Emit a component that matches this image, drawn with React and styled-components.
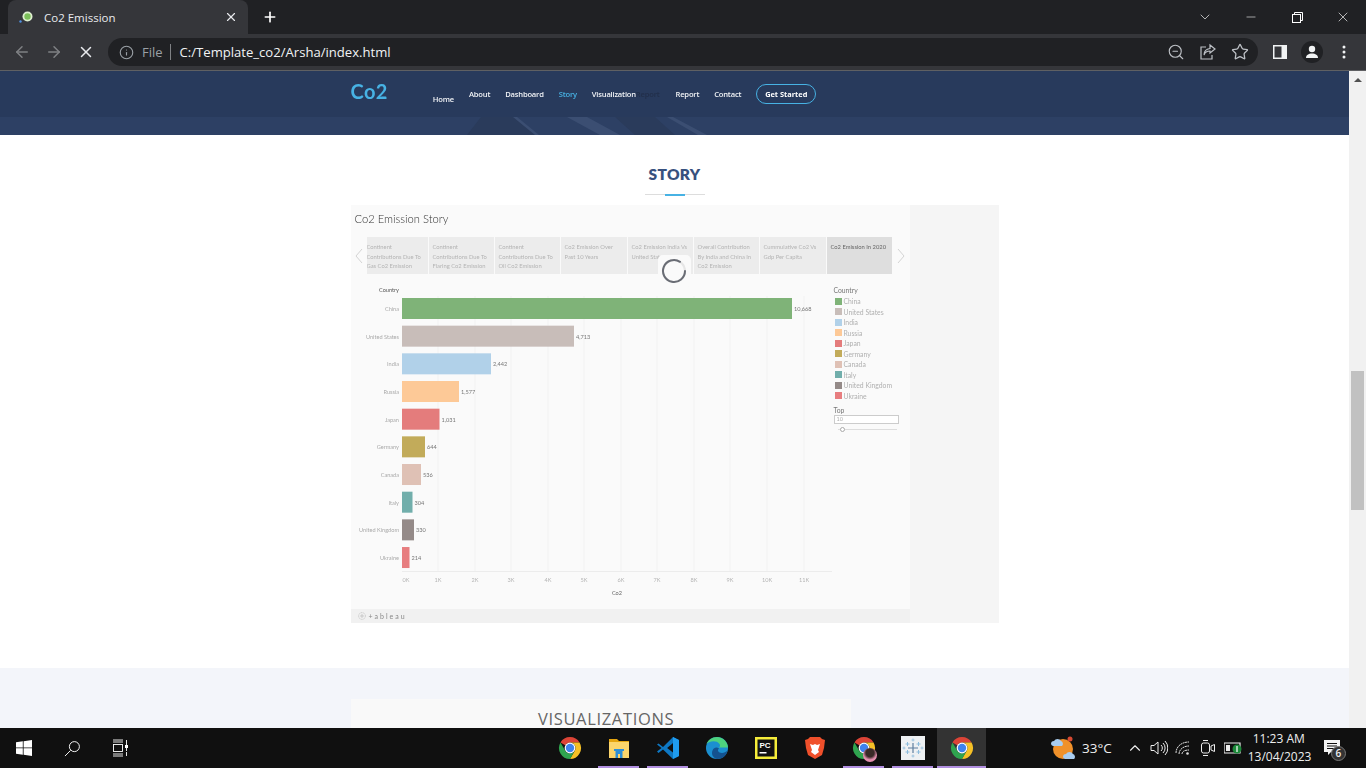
import React from "react";
import styled, { createGlobalStyle } from "styled-components";
import { ArrowLeft, ArrowRight, X, Plus, Info, ZoomOut, Star, ChevronDown, Minus, ChevronUp } from "lucide-react";

const Global = createGlobalStyle`
    html, body {
        margin: 0;
        height: 768px;
        overflow: hidden;
        background: #fff;
        font-family: "Open Sans", "Liberation Sans", sans-serif;
    }
`;

const Screen = styled.div`
    width: 1366px;
    height: 768px;
    display: flex;
    flex-direction: column;
    overflow: hidden;
`;

// Browser chrome
const TabStrip = styled.div`
    height: 34px;
    background: #202124;
    display: flex;
    align-items: flex-end;
    padding-left: 8px;
    color: #fff;
`;

const Tab = styled.div`
    width: 240px;
    height: 34px;
    box-sizing: border-box;
    background: #35363a;
    border-radius: 8px 8px 0 0;
    display: flex;
    align-items: center;
    padding: 0 10px 0 10px;
    font-size: 11.5px;
    color: #e8eaed;
`;

const TabTitle = styled.span`
    flex: 1;
    margin-left: 10px;
`;

const NewTab = styled.div`
    width: 44px;
    height: 34px;
    display: flex;
    align-items: center;
    justify-content: center;
`;

const WindowButtons = styled.div`
    margin-left: auto;
    height: 34px;
    display: flex;
    align-items: center;
`;

const WindowButton = styled.div`
    width: 46px;
    display: flex;
    justify-content: center;
`;

const Toolbar = styled.div`
    height: 36px;
    background: #35363a;
    border-bottom: 1px solid #5f6063;
    display: flex;
    align-items: center;
    padding-left: 6px;
`;

const NavIcon = styled.div`
    width: 32px;
    display: flex;
    justify-content: center;
    color: ${(p) => (p.$on ? "#e8eaed" : "#7f8184")};
`;

const Omnibox = styled.div`
    width: 1150px;
    height: 28px;
    margin-left: 6px;
    border-radius: 14px;
    background: #202124;
    display: flex;
    align-items: center;
    padding-left: 11px;
    box-sizing: border-box;
    font-size: 14px;
`;

const FileLabel = styled.span`
    color: #9aa0a6;
    font-size: 13px;
    margin-left: 8px;
    padding-right: 7px;
    border-right: 1px solid #7f8184;
    line-height: 16px;
`;

const Url = styled.span`
    color: #f1f3f4;
    margin-left: 9px;
    font-size: 13.1px;
`;

const OmniActions = styled.div`
    margin-left: auto;
    display: flex;
    gap: 14px;
    padding-right: 9px;
    color: #bdc1c6;
`;

const ToolRight = styled.div`
    display: flex;
    align-items: center;
    margin-left: 6px;
`;

const ToolSlot = styled.div`
    width: 32px;
    height: 24px;
    display: flex;
    align-items: center;
    justify-content: center;
`;

const Avatar = styled.div`
    width: 22px;
    height: 22px;
    border-radius: 50%;
    background: #202124;
    display: flex;
    align-items: center;
    justify-content: center;
`;

// Page
const Viewport = styled.div`
    height: 657px;
    display: flex;
    overflow: hidden;
`;

const Page = styled.div`
    width: 1349px;
    height: 657px;
    overflow: hidden;
`;

const Scrollbar = styled.div`
    width: 17px;
    background: #f1f1f1;
    display: flex;
    flex-direction: column;
    align-items: center;
`;

const ScrollArrow = styled.div`
    width: 0;
    height: 0;
    margin-top: 7px;
    border-left: 4px solid transparent;
    border-right: 4px solid transparent;
    border-bottom: 4px solid #505050;
`;

const ScrollThumb = styled.div`
    width: 13px;
    height: 139px;
    margin-top: 289px;
    background: #c1c1c1;
`;

const Header = styled.header`
    height: 46px;
    background: #283a5c;
`;

const HeaderInner = styled.div`
    width: 648px;
    margin: 0 auto;
    height: 46px;
    display: flex;
    align-items: flex-start;
    filter: blur(0.35px);
`;

const Logo = styled.div`
    font-family: "Lato", sans-serif;
    font-weight: 700;
    font-size: 20px;
    line-height: 24px;
    letter-spacing: 0.4px;
    color: #47b2e4;
    margin: 8px 45px 0 0;
`;

const Menu = styled.nav`
    display: flex;
    align-items: flex-start;
    padding-top: 17px;
`;

const MenuItem = styled.a`
    font-size: 7.6px;
    font-weight: 600;
    line-height: 12px;
    letter-spacing: -0.2px;
    color: ${(p) => p.$color || "#f1f3f6"};
    margin-right: ${(p) => (p.$gap === undefined ? 15 : p.$gap)}px;
    margin-top: ${(p) => p.$drop || 0}px;
    white-space: nowrap;
`;

const GetStarted = styled.a`
    width: 60px;
    height: 20px;
    box-sizing: border-box;
    margin: -4px 0 0 0;
    border: 1px solid #47b2e4;
    border-radius: 10px;
    font-size: 7.4px;
    font-weight: 700;
    color: #fff;
    display: flex;
    align-items: center;
    justify-content: center;
`;

const HeroStrip = styled.div`
    height: 18px;
    background: #2d4064;
    overflow: hidden;
`;

const StorySection = styled.section`
    background: #fff;
    height: 533px;
    padding-top: 28px;
    box-sizing: border-box;
`;

const SectionTitle = styled.h2`
    margin: 0;
    text-align: center;
    font-family: "Lato", sans-serif;
    font-size: 15.5px;
    font-weight: 800;
    line-height: 22px;
    letter-spacing: 0.3px;
    color: #37517e;
`;

const Divider = styled.div`
    width: 60px;
    height: 1px;
    margin: 9px auto 0;
    background: #ddd;
    display: flex;
    justify-content: center;
`;

const DividerAccent = styled.div`
    width: 20px;
    height: 2px;
    background: #47b2e4;
`;

const Embed = styled.div`
    width: 648px;
    height: 418px;
    margin: 10px auto 0;
    background: #f5f5f5;
    display: flex;
`;

const Viz = styled.div`
    width: 559px;
    display: flex;
    flex-direction: column;
    background: #fafafa;
    position: relative;
    filter: blur(0.4px);
`;

const StoryTitle = styled.div`
    font-family: "Lato", sans-serif;
    font-weight: 300;
    font-size: 11.2px;
    line-height: 16px;
    color: #333;
    padding: 6px 0 0 4px;
`;

const StoryNav = styled.div`
    display: flex;
    align-items: stretch;
    margin-top: 10px;
    height: 37px;
    overflow: visible;
`;

const StoryArrow = styled.div`
    width: 16px;
    display: flex;
    align-items: center;
    justify-content: center;
    flex-shrink: 0;
`;

const Points = styled.div`
    display: flex;
    gap: 1px;
    width: 526px;
    flex-shrink: 0;
    overflow: hidden;
`;

const Point = styled.div`
    width: ${(p) => p.$w}px;
    flex-shrink: 0;
    box-sizing: border-box;
    padding: 5px 2px 0 ${(p) => (p.$clip ? 0 : 4)}px;
    background: ${(p) => (p.$active ? "#dedede" : "#ececec")};
    color: ${(p) => (p.$active ? "#666" : "#b4b4b4")};
    font-family: "Lato", sans-serif;
    font-size: 5.8px;
    line-height: 9.5px;
`;

const Spinner = styled.div`
    position: absolute;
    left: 307px;
    top: 50px;
    width: 33px;
    height: 32px;
    border-radius: 5px;
    background: #fafafa;
    display: flex;
    align-items: center;
    justify-content: center;
`;

const ChartRow = styled.div`
    display: flex;
    height: 335px;
    margin-top: 0;
`;

const Legend = styled.div`
    padding-top: 12px;
    width: 68px;
    font-family: "Lato", sans-serif;
    font-size: 6.8px;
    color: #b0b0b0;
`;

const LegendTitle = styled.div`
    color: #777;
    line-height: 9px;
    margin-bottom: 1px;
`;

const LegendItem = styled.div`
    height: 10.5px;
    display: flex;
    align-items: center;
    padding-left: 1px;
    gap: 2px;
`;

const Swatch = styled.span`
    width: 7px;
    height: 7px;
    background: ${(p) => p.$c};
`;

const TopLabel = styled(LegendTitle)`
    margin: 5px 0 0;
`;

const TopInput = styled.div`
    width: 65px;
    height: 9px;
    border: 1px solid #ccc;
    box-sizing: border-box;
    background: #fff;
    line-height: 7px;
    padding-left: 2px;
    font-size: 5.5px;
`;

const Slider = styled.div`
    width: 59px;
    height: 1px;
    margin: 5px 0 0 4px;
    background: #ddd;
    position: relative;
`;

const SliderThumb = styled.div`
    position: absolute;
    left: 2px;
    top: -2px;
    width: 3px;
    height: 3px;
    border: 1px solid #aaa;
    border-radius: 50%;
    background: #fff;
`;

const VizFooter = styled.div`
    height: 14px;
    background: #f1f1f1;
    margin-top: auto;
    display: flex;
    align-items: center;
    padding-left: 7px;
    gap: 3px;
    font-family: "Lato", sans-serif;
    font-size: 7px;
    letter-spacing: 2px;
    color: #888;
`;

const VisualSection = styled.section`
    background: #f3f5fa;
    height: 60px;
    padding-top: 31px;
    box-sizing: border-box;
`;

const VisualCard = styled.div`
    width: 500px;
    height: 60px;
    margin-left: 351px;
    background: #f9f9f9;
    padding: 9px 0 0 187px;
    box-sizing: border-box;
    font-size: 16.5px;
    line-height: 21px;
    color: #666;
    letter-spacing: 0.65px;
`;

// Taskbar
const Taskbar = styled.div`
    height: 40px;
    background: #101010;
    display: flex;
    align-items: stretch;
    color: #fff;
`;

const SystemSlot = styled.div`
    width: 48px;
    display: flex;
    align-items: center;
    justify-content: center;
`;

const Pinned = styled.div`
    display: flex;
    margin-left: 401px;
`;

const PinSlot = styled.div`
    width: 49px;
    height: 40px;
    box-sizing: border-box;
    display: flex;
    align-items: center;
    justify-content: center;
    background: ${(p) => (p.$active ? "#333" : "transparent")};
    position: relative;
`;

const RunMark = styled.div`
    position: absolute;
    bottom: 0;
    left: ${(p) => (p.$full ? 0 : 4)}px;
    right: ${(p) => (p.$full ? 0 : 4)}px;
    height: 2px;
    background: #b18fe0;
`;

const ProfileDot = styled.div`
    position: absolute;
    left: 24px;
    top: 20px;
    width: 14px;
    height: 14px;
    border-radius: 50%;
    background: radial-gradient(circle at 50% 35%, #3a2a28 0 35%, #e58fb0 60%);
`;

const Tray = styled.div`
    display: flex;
    align-items: center;
    margin-left: 64px;
    font-size: 13px;
    color: #eee;
`;

const Temp = styled.span`
    margin: 0 11px 0 6px;
    font-size: 13.5px;
`;

const TrayIcon = styled.div`
    width: ${(p) => p.$w || 25}px;
    display: flex;
    justify-content: center;
`;

const Clock = styled.div`
    width: 62px;
    margin-left: 2px;
    text-align: center;
    font-size: 12px;
    line-height: 18px;
`;

const Notify = styled.div`
    margin-left: 14px;
    position: relative;
    display: flex;
`;

const NotifyBadge = styled.div`
    position: absolute;
    left: 7px;
    top: 6px;
    width: 15px;
    height: 15px;
    border-radius: 50%;
    background: #333;
    border: 1px solid #777;
    box-sizing: border-box;
    font-size: 10px;
    line-height: 13px;
    text-align: center;
    font-weight: 600;
`;

const points = [
    { w: 61, clip: true, t: "Continent Contributions Due To Gas Co2 Emission" },
    { w: 65, t: "Continent Contributions Due To Flaring Co2 Emission" },
    { w: 65, t: "Continent Contributions Due To Oil Co2 Emission" },
    { w: 66, t: "Co2 Emission Over Past 10 Years" },
    { w: 65, t: "Co2 Emission India Vs United States" },
    { w: 65, t: "Overall Contribution By India and China In Co2 Emission" },
    { w: 66, t: "Cummulative Co2 Vs Gdp Per Capita" },
    { w: 65, t: "Co2 Emission In 2020", active: true },
];

const countries = [
    { name: "China", end: 792, value: "10,668", color: "#7fb378" },
    { name: "United States", end: 574, value: "4,713", color: "#c8bdb9" },
    { name: "India", end: 491, value: "2,442", color: "#b1d1e9" },
    { name: "Russia", end: 459, value: "1,577", color: "#fdc997" },
    { name: "Japan", end: 439.5, value: "1,031", color: "#e47c7c" },
    { name: "Germany", end: 425, value: "644", color: "#c2ab5a" },
    { name: "Canada", end: 421, value: "536", color: "#dfc1b5" },
    { name: "Italy", end: 412.5, value: "304", color: "#71aeab" },
    { name: "United Kingdom", end: 414, value: "330", color: "#948a88" },
    { name: "Ukraine", end: 409.5, value: "214", color: "#e77d7f" },
];

const ticks = [
    ["0K", 406], ["1K", 438], ["2K", 475], ["3K", 511], ["4K", 548], ["5K", 584],
    ["6K", 621], ["7K", 657], ["8K", 694], ["9K", 730], ["10K", 767], ["11K", 804],
];

// chart sits at x 351, y 274 on the screen
const BarChart = () => (
    <svg width="483" height="335" viewBox="351 274 483 335" fontFamily="Lato, sans-serif" fontSize="5.6">
        {ticks.slice(1).map(([k, x]) => (
            <line key={k} x1={x} x2={x} y1="296" y2="571" stroke="#f2f2f2" strokeWidth="1" />
        ))}
        <line x1="402" x2="832" y1="571.5" y2="571.5" stroke="#ececec" />
        <text x="399" y="292" textAnchor="end" fill="#555">Country</text>
        {countries.map((c, i) => {
            const top = 298 + i * 27.67;
            return (
                <g key={c.name}>
                    <text x="399" y={top + 13} textAnchor="end" fill="#aaa">{c.name}</text>
                    <rect x="402" y={top} width={c.end - 402} height="21" fill={c.color} />
                    <text x={c.end + 2} y={top + 13} fill="#777">{c.value}</text>
                </g>
            );
        })}
        {ticks.map(([k, x]) => (
            <text key={k} x={x} y="582" textAnchor="middle" fill="#b5b5b5">{k}</text>
        ))}
        <text x="617" y="595" textAnchor="middle" fill="#666">Co2</text>
    </svg>
);

const ChromeIcon = ({ size = 24 }) => (
    <svg width={size} height={size} viewBox="0 0 24 24">
        <path d="M12 1a11 11 0 0 1 9.53 5.5H12a5.5 5.5 0 0 0-4.76 2.75L2.47 6.5A11 11 0 0 1 12 1z" fill="#dc4437" />
        <path d="M21.53 6.5A11 11 0 0 1 12 23l4.76-8.25A5.5 5.5 0 0 0 12 6.5z" fill="#f6c026" />
        <path d="M2.47 6.5A11 11 0 0 0 12 23l4.76-8.25a5.5 5.5 0 0 1-9.52 0z" fill="#2fa44f" />
        <circle cx="12" cy="12" r="5.4" fill="#fff" />
        <circle cx="12" cy="12" r="4.2" fill="#3f82ef" />
    </svg>
);

const FolderIcon = () => (
    <svg width="24" height="24" viewBox="0 0 24 24">
        <path d="M2 3h8l2 2h10v17H2z" fill="#e5a50f" />
        <rect x="2" y="6" width="20" height="16" fill="#fcd56b" />
        <path d="M7 13h10v2h-1.500v7H13v-4h-2v4H8.500v-7H7z" fill="#2f8fd6" />
    </svg>
);

const VsCodeIcon = () => (
    <svg width="24" height="24" viewBox="0 0 24 24">
        <path d="M17 1l6 3v16l-6 3-10-9.500-4.500 3.500L1 15.500 5.500 12 1 8.500 2.500 7.500 7 11z" fill="#0e78c4" />
        <path d="M17 1l6 3v16l-6 3V16l-6-4 6-5z" fill="#1f9cf0" />
        <path d="M17 7l-6 5 6 4.500z" fill="#101010" />
    </svg>
);

const EdgeIcon = () => (
    <svg width="24" height="24" viewBox="0 0 24 24">
        <circle cx="12" cy="12" r="11" fill="#1b8fd0" />
        <path d="M23 12c0-6-5-11-11-11C7 1 3 4 1.500 8c3-3 10-4 13 0 1 1.500.5 3-1 3.500h9.500z" fill="#4ed27e" />
        <path d="M12 23c-4-1-6-5-4.500-8.500C9 11 12 11 14 12.500c-1.500 1-1.500 3 .5 4 3 1.200 6 0 8-2-1 5-5 8.500-10.500 8.500z" fill="#14528f" />
    </svg>
);

const PycharmIcon = () => (
    <svg width="22" height="22" viewBox="0 0 22 22">
        <rect width="22" height="22" fill="#f5ec3a" />
        <rect x="2.500" y="2.500" width="17" height="17" fill="#111" />
        <text x="4.500" y="11" fontFamily="Liberation Sans, sans-serif" fontSize="8" fontWeight="700" fill="#fff">PC</text>
        <rect x="4.500" y="15" width="7" height="1.500" fill="#fff" />
    </svg>
);

const BraveIcon = () => (
    <svg width="22" height="24" viewBox="0 0 22 24">
        <path d="M6 1h10l2 2 3 1-1 8-2 7-7 4-7-4-2-7-1-8 3-1z" fill="#f0502b" />
        <path d="M6 8l3 1 2-1 2 1 3-1-2 6 1 2-4 3-4-3 1-2z" fill="#fff" />
    </svg>
);

const TableauIcon = () => (
    <svg width="24" height="24" viewBox="0 0 24 24">
        <rect width="24" height="24" fill="#eef1f3" />
        <path d="M12 7v10M7 12h10" stroke="#5f7f9f" strokeWidth="1.200" />
        <path d="M6.500 6v4M4.500 8h4M17.500 6v4M15.500 8h4M6.500 14v4M4.500 16h4M17.500 14v4M15.500 16h4" stroke="#8dbcdc" strokeWidth="1" />
        <path d="M12 2.500v3M10.500 4h3M12 18.500v3M10.500 20h3M3 10.500v3M1.500 12h3M21 10.500v3M19.500 12h3" stroke="#8dbcdc" strokeWidth="0.800" />
    </svg>
);

const WindowsLogo = () => (
    <svg width="16" height="16" viewBox="0 0 16 16" fill="#fff">
        <path d="M0 2.300l6.800-1V7.500H0zM7.600 1.200L16 0v7.500H7.600zM0 8.300h6.800v6.400l-6.800-1zM7.600 8.300H16V16l-8.400-1.200z" />
    </svg>
);

const SearchGlyph = () => (
    <svg width="17" height="17" viewBox="0 0 18 18" fill="none" stroke="#fff" strokeWidth="1">
        <circle cx="11" cy="7" r="5.300" />
        <path d="M7 11l-6 6" />
    </svg>
);

const TaskViewGlyph = () => (
    <svg width="16" height="18" viewBox="0 0 16 18" fill="none" stroke="#fff" strokeWidth="0.900">
        <path d="M1 1h10M1 3h10M1 15h10M1 17h10" />
        <rect x="1.500" y="5.500" width="9" height="7" />
        <path d="M14.500 1v16" strokeDasharray="5 1" />
        <rect x="13" y="6" width="3" height="3" fill="#fff" stroke="none" />
    </svg>
);

const ShareGlyph = () => (
    <svg width="18" height="18" viewBox="0 0 18 18" fill="none" stroke="currentColor" strokeWidth="1.200">
        <path d="M7 4H2v12h11v-4" />
        <path d="M11 2l5 4-5 4V8C8 8 6 9 5 12c0-4 2-6 6-6.500z" />
    </svg>
);

const SidePanelGlyph = () => (
    <svg width="14" height="14" viewBox="0 0 14 14">
        <rect width="14" height="14" fill="#f1f3f4" />
        <rect x="1.500" y="1.500" width="7" height="11" fill="#35363a" />
    </svg>
);

const ProfileGlyph = () => (
    <svg width="14" height="14" viewBox="0 0 14 14" fill="#f1f3f4">
        <circle cx="7" cy="4" r="3.200" />
        <path d="M1 13c0-3 2.500-4.500 6-4.500s6 1.500 6 4.500z" />
    </svg>
);

const KebabGlyph = () => (
    <svg width="4" height="14" viewBox="0 0 4 14" fill="#f1f3f4">
        <circle cx="2" cy="2" r="1.500" />
        <circle cx="2" cy="7" r="1.500" />
        <circle cx="2" cy="12" r="1.500" />
    </svg>
);

const RestoreGlyph = () => (
    <svg width="11" height="11" viewBox="0 0 11 11" fill="none" stroke="#fff" strokeWidth="1">
        <rect x="0.500" y="2.500" width="8" height="8" />
        <path d="M2.500 2.500v-2h8v8h-2" />
    </svg>
);

const Favicon = () => (
    <svg width="16" height="16" viewBox="0 0 16 16">
        <circle cx="9.500" cy="7.500" r="5" fill="#dff0d0" />
        <circle cx="9.500" cy="7.500" r="3.200" fill="#7cc05a" />
        <circle cx="2.500" cy="12.500" r="1.200" fill="#4f8fe0" />
    </svg>
);

const LoadRing = () => (
    <svg width="26" height="26" viewBox="0 0 26 26" fill="none">
        <circle cx="13" cy="13" r="11" stroke="#e6e6e6" strokeWidth="2" />
        <path d="M19 3.800A11 11 0 1 0 24 13" stroke="#6a6d75" strokeWidth="2" strokeLinecap="round" />
    </svg>
);

const Chevron = ({ right }) => (
    <svg width="8" height="16" viewBox="0 0 8 16" fill="none" stroke="#d4d4d4" strokeWidth="1">
        <path d={right ? "M1 1l6 7-6 7" : "M7 1L1 8l6 7"} />
    </svg>
);

const TableauMark = () => (
    <svg width="8" height="8" viewBox="0 0 8 8" fill="none" stroke="#bbb" strokeWidth="0.700">
        <circle cx="4" cy="4" r="3.400" strokeDasharray="1.200 0.600" />
        <path d="M4 2v4M2 4h4" />
    </svg>
);

const WeatherIcon = () => (
    <svg width="26" height="26" viewBox="0 0 26 26">
        <circle cx="13" cy="14" r="10" fill="#f0912a" />
        <circle cx="20" cy="4" r="2.500" fill="#d84a32" />
        <path d="M1 9a3 3 0 0 1 3-3 4 4 0 0 1 7 0 3 3 0 0 1 1 5H3a2.500 2.500 0 0 1-2-2z" fill="#a9cdf0" />
        <path d="M13 22a3 3 0 0 1 3-3 4 4 0 0 1 7 0 3 3 0 0 1 1 5h-9a2.500 2.500 0 0 1-2-2z" fill="#a9cdf0" />
    </svg>
);

const SpeakerGlyph = () => (
    <svg width="18" height="16" viewBox="0 0 18 16" fill="none" stroke="#eee" strokeWidth="1">
        <path d="M1 5.500h3L8 2v12l-4-3.500H1z" />
        <path d="M11 5a4 4 0 0 1 0 6M13 3a7 7 0 0 1 0 10M15 1a10 10 0 0 1 0 14" />
    </svg>
);

const WifiGlyph = () => (
    <svg width="16" height="16" viewBox="0 0 16 16" fill="none" stroke="#ddd" strokeWidth="1">
        <path d="M1 13C1 7 6 2 14 2M4 14c0-4 4-8 10-8M7 14c0-2 2-4 7-4" strokeDasharray="2 0.500" />
        <circle cx="12.500" cy="13.500" r="1.300" fill="#ddd" stroke="none" />
    </svg>
);

const MeetGlyph = () => (
    <svg width="16" height="18" viewBox="0 0 16 18" fill="none" stroke="#eee" strokeWidth="1">
        <rect x="1.500" y="4" width="8" height="10" rx="2" />
        <path d="M3 1.500h5M3 16.500h5" />
        <path d="M11 7l3.500-1.500v7L11 11z" />
    </svg>
);

const BatteryGlyph = () => (
    <svg width="18" height="14" viewBox="0 0 18 14">
        <path d="M0 2h16v10H0z" fill="none" stroke="#eee" strokeWidth="1.200" />
        <rect x="2" y="4" width="4" height="6" fill="#eee" />
        <circle cx="13" cy="8" r="4.500" fill="#1c8a3a" />
        <path d="M13 5v6" stroke="#fff" strokeWidth="1.200" />
    </svg>
);

const MessageGlyph = () => (
    <svg width="16" height="16" viewBox="0 0 16 16">
        <path d="M0 0h16v12H7l-3 3v-3H0z" fill="#f4f4f4" />
        <path d="M3 3.500h10M3 6h10M3 8.500h7" stroke="#101010" strokeWidth="1" />
    </svg>
);

const App = () => {
    return (
        <Screen>
            <Global />
            <TabStrip>
                <Tab>
                    <Favicon />
                    <TabTitle>Co2 Emission</TabTitle>
                    <X size={14} strokeWidth={2} />
                </Tab>
                <NewTab>
                    <Plus size={16} strokeWidth={2.5} />
                </NewTab>
                <WindowButtons>
                    <WindowButton><ChevronDown size={16} strokeWidth={1} /></WindowButton>
                    <WindowButton><Minus size={14} strokeWidth={1} /></WindowButton>
                    <WindowButton><RestoreGlyph /></WindowButton>
                    <WindowButton><X size={16} strokeWidth={1} /></WindowButton>
                </WindowButtons>
            </TabStrip>
            <Toolbar>
                <NavIcon><ArrowLeft size={18} strokeWidth={2} /></NavIcon>
                <NavIcon><ArrowRight size={18} strokeWidth={2} /></NavIcon>
                <NavIcon $on><X size={18} strokeWidth={2} /></NavIcon>
                <Omnibox>
                    <Info size={15} color="#9aa0a6" strokeWidth={1.8} />
                    <FileLabel>File</FileLabel>
                    <Url>C:/Template_co2/Arsha/index.html</Url>
                    <OmniActions>
                        <ZoomOut size={18} strokeWidth={1.5} />
                        <ShareGlyph />
                        <Star size={18} strokeWidth={1.7} />
                    </OmniActions>
                </Omnibox>
                <ToolRight>
                    <ToolSlot><SidePanelGlyph /></ToolSlot>
                    <ToolSlot><Avatar><ProfileGlyph /></Avatar></ToolSlot>
                    <ToolSlot><KebabGlyph /></ToolSlot>
                </ToolRight>
            </Toolbar>
            <Viewport>
                <Page>
                    <Header>
                        <HeaderInner>
                            <Logo>Co2</Logo>
                            <Menu>
                                <MenuItem $drop={5}>Home</MenuItem>
                                <MenuItem>About</MenuItem>
                                <MenuItem>Dashboard</MenuItem>
                                <MenuItem $color="#47b2e4">Story</MenuItem>
                                <MenuItem $gap={0}>Visualization</MenuItem>
                                <MenuItem $color="#222f4a" $gap={16}>Report</MenuItem>
                                <MenuItem>Report</MenuItem>
                                <MenuItem>Contact</MenuItem>
                                <GetStarted>Get Started</GetStarted>
                            </Menu>
                        </HeaderInner>
                    </Header>
                    <HeroStrip>
                        <svg width="1349" height="18" viewBox="0 0 1349 18">
                            <path d="M512 0h5l22 18h-5zM567 0h20l33 18h-20zM667 0h6l34 18h-9z" fill="#3b4e72" />
                            <path d="M467 18l14-18h32l22 18zM615 0h40l20 18h-40z" fill="#2a3b5b" />
                        </svg>
                    </HeroStrip>
                    <StorySection>
                        <SectionTitle>STORY</SectionTitle>
                        <Divider><DividerAccent /></Divider>
                        <Embed>
                            <Viz>
                                <StoryTitle>Co2 Emission Story</StoryTitle>
                                <StoryNav>
                                    <StoryArrow><Chevron /></StoryArrow>
                                    <Points>
                                        {points.map((p) => (
                                            <Point key={p.t} $w={p.w} $clip={p.clip} $active={p.active}>{p.t}</Point>
                                        ))}
                                    </Points>
                                    <StoryArrow><Chevron right /></StoryArrow>
                                </StoryNav>
                                <Spinner><LoadRing /></Spinner>
                                <ChartRow>
                                    <BarChart />
                                    <Legend>
                                        <LegendTitle>Country</LegendTitle>
                                        {countries.map((c) => (
                                            <LegendItem key={c.name}>
                                                <Swatch $c={c.color} />
                                                {c.name}
                                            </LegendItem>
                                        ))}
                                        <TopLabel>Top</TopLabel>
                                        <TopInput>10</TopInput>
                                        <Slider><SliderThumb /></Slider>
                                    </Legend>
                                </ChartRow>
                                <VizFooter><TableauMark />+ableau</VizFooter>
                            </Viz>
                        </Embed>
                    </StorySection>
                    <VisualSection>
                        <VisualCard>VISUALIZATIONS</VisualCard>
                    </VisualSection>
                </Page>
                <Scrollbar>
                    <ScrollArrow />
                    <ScrollThumb />
                </Scrollbar>
            </Viewport>
            <Taskbar>
                <SystemSlot><WindowsLogo /></SystemSlot>
                <SystemSlot><SearchGlyph /></SystemSlot>
                <SystemSlot><TaskViewGlyph /></SystemSlot>
                <Pinned>
                    <PinSlot><ChromeIcon /></PinSlot>
                    <PinSlot><FolderIcon /><RunMark /></PinSlot>
                    <PinSlot><VsCodeIcon /><RunMark /></PinSlot>
                    <PinSlot><EdgeIcon /></PinSlot>
                    <PinSlot><PycharmIcon /></PinSlot>
                    <PinSlot><BraveIcon /></PinSlot>
                    <PinSlot><ChromeIcon /><ProfileDot /><RunMark /></PinSlot>
                    <PinSlot><TableauIcon /><RunMark /></PinSlot>
                    <PinSlot $active><ChromeIcon /><RunMark $full /></PinSlot>
                </Pinned>
                <Tray>
                    <WeatherIcon />
                    <Temp>33°C</Temp>
                    <TrayIcon $w={24}><ChevronUp size={18} strokeWidth={1.5} /></TrayIcon>
                    <TrayIcon $w={24}><SpeakerGlyph /></TrayIcon>
                    <TrayIcon><WifiGlyph /></TrayIcon>
                    <TrayIcon><MeetGlyph /></TrayIcon>
                    <TrayIcon><BatteryGlyph /></TrayIcon>
                    <Clock>11:23 AM<br />13/04/2023</Clock>
                    <Notify>
                        <MessageGlyph />
                        <NotifyBadge>6</NotifyBadge>
                    </Notify>
                </Tray>
            </Taskbar>
        </Screen>
    );
};

export default App;
